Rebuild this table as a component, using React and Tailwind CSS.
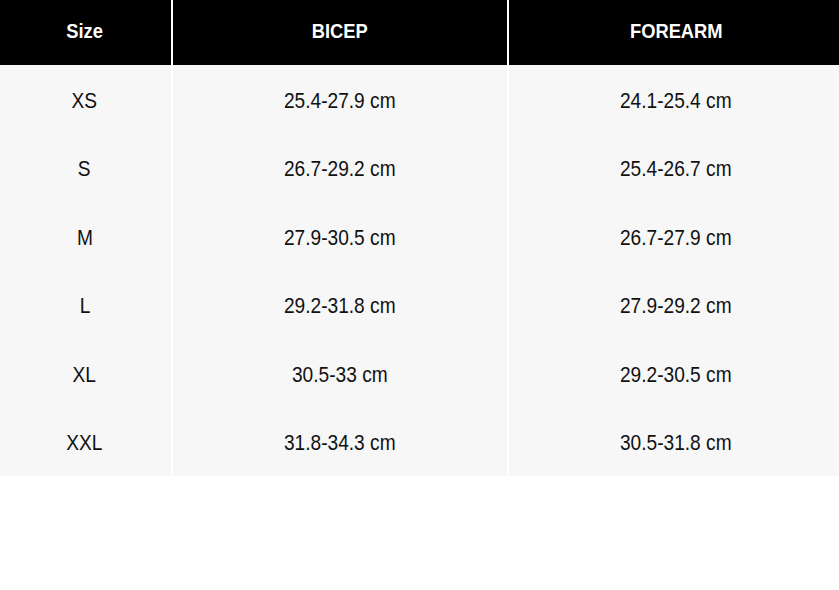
import React from 'react';

const rows = [
  ['XS', '25.4-27.9 cm', '24.1-25.4 cm'],
  ['S', '26.7-29.2 cm', '25.4-26.7 cm'],
  ['M', '27.9-30.5 cm', '26.7-27.9 cm'],
  ['L', '29.2-31.8 cm', '27.9-29.2 cm'],
  ['XL', '30.5-33 cm', '29.2-30.5 cm'],
  ['XXL', '31.8-34.3 cm', '30.5-31.8 cm'],
];

// small nudges so the text sits where the reference has it
const colPad = ['pr-[2px]', '', 'pl-[4px]'];

const App = () => {
  return (
    <div className="w-[839px] h-[590px] bg-white font-['Liberation_Sans',Arial,sans-serif]">
      {/* header */}
      <div className="grid grid-cols-[171px_334px_1fr] gap-x-[2px] bg-white">
        {['Size', 'BICEP', 'FOREARM'].map((h, i) => (
          <div key={h} className={`h-[65px] bg-black text-white font-bold text-[19.5px] flex items-center justify-center pb-[2px] ${colPad[i]}`}>
            <span className="inline-block scale-x-[0.94]">{h}</span>
          </div>
        ))}
      </div>
      {/* body */}
      <div className="grid grid-cols-[171px_334px_1fr] gap-x-[2px] bg-white">
        {rows.map((row) =>
          row.map((cell, i) => (
            <div key={row[0] + i} className={`h-[68.5px] bg-[#f7f7f7] text-[#111] text-[21.5px] flex items-center justify-center pt-[3px] ${colPad[i]}`}>
              <span className="inline-block scale-x-[0.89]">{cell}</span>
            </div>
          ))
        )}
      </div>
    </div>
  );
};

export default App;
